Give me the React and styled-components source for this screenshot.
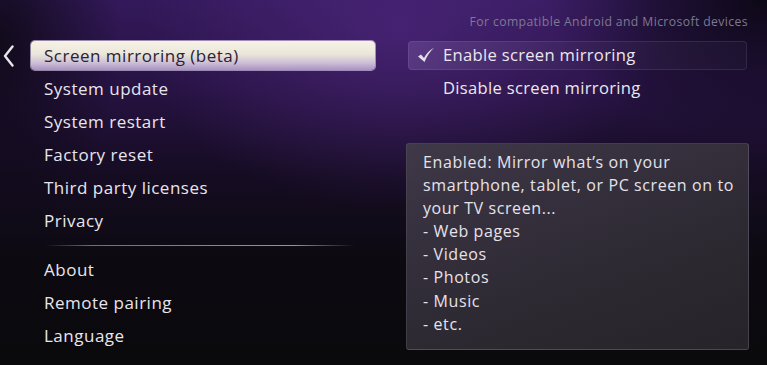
import React from "react";
import styled, { createGlobalStyle } from "styled-components";

const GlobalStyle = createGlobalStyle`
  body {
    margin: 0;
    background: #0a090d;
  }
  * {
    box-sizing: border-box;
  }
`;

const menuTop = ["Screen mirroring (beta)", "System update", "System restart", "Factory reset", "Third party licenses", "Privacy"];
const menuBottom = ["About", "Remote pairing", "Language"];
const details = ["- Web pages", "- Videos", "- Photos", "- Music", "- etc."];

const Screen = styled.div`
  width: 767px;
  height: 365px;
  overflow: hidden;
  display: flex;
  font-family: "Open Sans", "Liberation Sans", sans-serif;
  color: #e9e5ec;
  background:
    radial-gradient(ellipse 260px 180px at 400px 30px, rgba(88, 44, 140, 0.55), rgba(88, 44, 140, 0) 100%),
    radial-gradient(ellipse 220px 140px at 767px 0px, rgba(8, 6, 14, 0.9), rgba(8, 6, 14, 0) 100%),
    radial-gradient(ellipse 120px 200px at 0px 40px, rgba(10, 8, 14, 0.8), rgba(10, 8, 14, 0) 100%),
    linear-gradient(to bottom, #33195a 0%, #281345 22%, #150c22 48%, #0c0a10 72%, #0a090c 100%);
`;

const Sidebar = styled.div`
  width: 406px;
  display: flex;
  padding-top: 39px;
`;

const BackArrow = styled.div`
  width: 31px;
  height: 33px;
  display: flex;
  align-items: center;
  padding-left: 3px;
`;

const Menu = styled.div`
  width: 344px;
  display: flex;
  flex-direction: column;
`;

const MenuRow = styled.div`
  height: 33px;
  display: flex;
  align-items: center;
`;

const MenuItem = styled.div`
  flex: 1;
  height: ${(p) => (p.$active ? "29px" : "33px")};
  display: flex;
  align-items: center;
  padding-left: 13px;
  padding-bottom: 1px;
  font-size: 17px;
  letter-spacing: 0.5px;
  border-radius: 4px;
  color: ${(p) => (p.$active ? "#2b2233" : "#e9e5ec")};
  background: ${(p) =>
    p.$active
      ? "linear-gradient(to bottom, #f6f3e6 0%, #ebe6da 45%, #cdbfd6 75%, #a993c4 100%)"
      : "transparent"};
  box-shadow: ${(p) => (p.$active ? "0 0 0 1px rgba(230, 215, 245, 0.6)" : "none")};
`;

const Divider = styled.div`
  height: 16px;
  display: flex;
  align-items: center;
  padding: 0 20px 0 14px;
  &::after {
    content: "";
    flex: 1;
    height: 1px;
    background: linear-gradient(to right, rgba(160, 150, 170, 0) 0%, rgba(160, 150, 170, 0.7) 15%, rgba(200, 190, 215, 0.75) 80%, rgba(160, 150, 170, 0) 100%);
  }
`;

const Content = styled.div`
  width: 343px;
  display: flex;
  flex-direction: column;
`;

const Hint = styled.div`
  height: 42px;
  padding: 13px 1px 0 0;
  text-align: right;
  font-size: 12.2px;
  letter-spacing: 0.4px;
  color: #7f7891;
`;

const Option = styled.div`
  height: 33px;
  margin-left: 2px;
  margin-right: 2px;
  display: flex;
  align-items: center;
  position: relative;
  top: -3px;
`;

const OptionBox = styled.div`
  flex: 1;
  height: 29px;
  display: flex;
  align-items: center;
  padding-bottom: 3px;
  border-radius: 4px;
  background: ${(p) =>
    p.$selected
      ? "linear-gradient(to right, rgba(150, 120, 190, 0.28) 0%, rgba(90, 70, 120, 0.18) 50%, rgba(40, 30, 60, 0.35) 100%)"
      : "transparent"};
  box-shadow: ${(p) => (p.$selected ? "inset 0 0 0 1px rgba(200, 180, 230, 0.12)" : "none")};
`;

const CheckSlot = styled.div`
  width: 35px;
  display: flex;
  justify-content: flex-end;
  padding-right: 8px;
  padding-top: 2px;
`;

const OptionText = styled.span`
  font-size: 16.6px;
  letter-spacing: 0.3px;
  color: #ebe7ee;
`;

const Panel = styled.div`
  margin-top: 35px;
  height: 207px;
  padding: 7px 10px 0 16px;
  border-radius: 3px;
  border: 1px solid rgba(160, 150, 175, 0.22);
  background: linear-gradient(160deg, #3f3848 0%, #332e3a 40%, #2a272e 75%, #26242a 100%);
  font-size: 16px;
  line-height: 23.1px;
  letter-spacing: 0.6px;
  color: #e6e2ea;
`;

const Line = styled.div`
  white-space: nowrap;
`;

const App = () => (
  <>
    <GlobalStyle />
    <Screen>
      <Sidebar>
        <BackArrow>
          <svg width="11" height="22" viewBox="0 0 11 22">
            <polyline points="9.5,1.5 2,11 9.5,20.5" fill="none" stroke="#e8e4ea" strokeWidth="2.4" strokeLinecap="round" strokeLinejoin="round" />
          </svg>
        </BackArrow>
        <Menu>
          {menuTop.map((label, i) => (
            <MenuRow key={label}>
              <MenuItem $active={i === 0}>{label}</MenuItem>
            </MenuRow>
          ))}
          <Divider />
          {menuBottom.map((label) => (
            <MenuRow key={label}>
              <MenuItem>{label}</MenuItem>
            </MenuRow>
          ))}
        </Menu>
      </Sidebar>
      <Content>
        <Hint>For compatible Android and Microsoft devices</Hint>
        <Option>
          <OptionBox $selected>
            <CheckSlot>
              <svg width="18" height="16" viewBox="0 0 18 16">
                <path d="M1 9.5 L4 7.5 L7 11 C9.5 6.5 12.5 3 17 0.8 C13 4.5 10 9 7.5 15 Z" fill="#e3dfe8" />
              </svg>
            </CheckSlot>
            <OptionText>Enable screen mirroring</OptionText>
          </OptionBox>
        </Option>
        <Option>
          <OptionBox>
            <CheckSlot />
            <OptionText>Disable screen mirroring</OptionText>
          </OptionBox>
        </Option>
        <Panel>
          <Line>Enabled: Mirror what’s on your</Line>
          <Line>smartphone, tablet, or PC screen on to</Line>
          <Line>your TV screen...</Line>
          {details.map((d) => (
            <Line key={d}>{d}</Line>
          ))}
        </Panel>
      </Content>
    </Screen>
  </>
);

export default App;
